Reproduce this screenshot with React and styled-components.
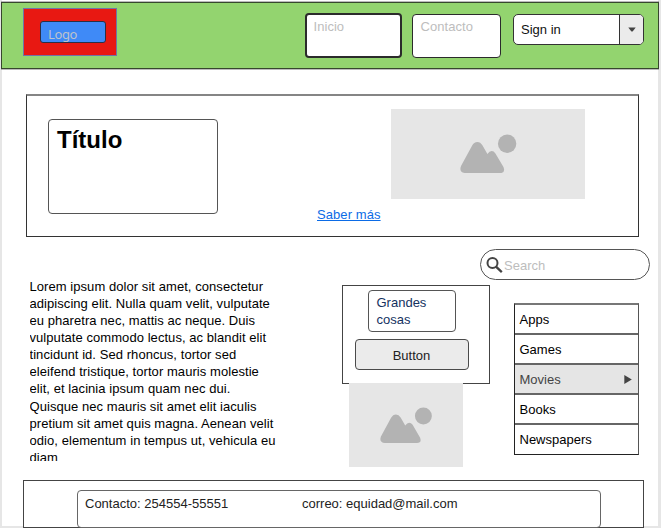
import React from 'react';
import styled, { createGlobalStyle } from 'styled-components';

const GlobalStyle = createGlobalStyle`
  * { box-sizing: border-box; }
  body {
    margin: 0;
    background: #ececec;
    font-family: 'Liberation Sans', Arial, sans-serif;
    font-size: 13px;
    line-height: 17px;
    color: #111;
  }
`;

const Page = styled.div`
  width: 661px;
  height: 528px;
  overflow: hidden;
  padding-top: 1px;
  background: linear-gradient(#fff, #fff) 2px 0 / 656px 526px no-repeat, #e6e6e6;
`;

const Header = styled.header`
  display: flex;
  align-items: flex-start;
  width: 658px;
  height: 67px;
  margin: 1px 0 0 1px;
  padding: 0 14px 0 21px;
  border: 1px solid #37472e;
  background: #93d46f;
  box-shadow: 0 1px 0 rgba(60, 60, 60, 0.35), 0 -1px 0 rgba(60, 60, 60, 0.35);
`;

const LogoFrame = styled.div`
  width: 94px;
  height: 48px;
  margin: 5px auto 0 0;
  padding: 12px 0 0 16px;
  border: 1px solid #7173a5;
  background: #e81812;
`;

const Logo = styled.div`
  width: 66px;
  height: 22px;
  padding: 3px 0 0 7px;
  border: 1px solid #2c2f45;
  border-radius: 3px;
  background: #3f8af7;
  color: #bdc3cc;
  font-family: 'Noto Sans', sans-serif;
  font-size: 13px;
  letter-spacing: -0.4px;
  line-height: 18px;
`;

const NavBox = styled.a`
  width: ${(p) => (p.$active ? 97 : 89)}px;
  height: ${(p) => (p.$active ? 45 : 44)}px;
  margin: ${(p) => (p.$active ? '10px 10px 0 0' : '11px 12px 0 0')};
  padding: ${(p) => (p.$active ? '3px 6.5px' : '3px 7.5px')};
  border: ${(p) => (p.$active ? 2 : 1)}px solid #2b2b2b;
  border-radius: 4px;
  background: #fff;
  color: #bdbdbd;
  letter-spacing: 0.05px;
`;

const Select = styled.div`
  display: flex;
  width: 131px;
  height: 31px;
  margin-top: 11px;
  border: 1px solid #333;
  border-radius: 5px;
  background: #fff;
  overflow: hidden;
  line-height: 30px;
`;

const SelectValue = styled.span`
  flex: 1;
  padding-left: 7px;
`;

const SelectArrow = styled.span`
  display: flex;
  align-items: center;
  justify-content: center;
  width: 24px;
  border-left: 1px solid #333;
  background: #ebebeb;
`;

const Hero = styled.section`
  display: flex;
  align-items: flex-start;
  width: 613px;
  height: 143px;
  margin: 25px 0 0 26px;
  border: 1px solid #333;
  border-top: 2px solid #858585;
`;

const TitleBox = styled.h1`
  width: 170px;
  height: 95px;
  margin: 23px 0 0 21px;
  padding: 5px 8px;
  border: 1px solid #555;
  border-radius: 4px;
  color: #000;
  font-size: 24px;
  line-height: 30px;
`;

const MoreLink = styled.a`
  margin: 110px 10px 0 99px;
  width: 64px;
  white-space: nowrap;
  color: #0b6be6;
  letter-spacing: 0.08px;
  text-decoration: underline;
`;

const ImageBox = styled.div`
  display: flex;
  width: ${(p) => p.$w}px;
  height: ${(p) => p.$h}px;
  margin: ${(p) => p.$m};
  padding: ${(p) => p.$pad};
  background: #e6e6e6;
`;

const Content = styled.main`
  display: flex;
  align-items: flex-start;
  height: 243px;
`;

const Article = styled.p`
  width: 256px;
  height: 183px;
  margin: 41px 0 0 29.5px;
  overflow: hidden;
  white-space: pre-line;
  color: #000;
  letter-spacing: 0.06px;
  line-height: 17.08px;
`;

const Middle = styled.div`
  width: 148px;
  margin: 48px 0 0 56.5px;
`;

const Card = styled.div`
  width: 148px;
  height: 99px;
  padding: 4px 0 0 12px;
  border: 1px solid #444;
`;

const CardText = styled.div`
  width: 88px;
  height: 42px;
  margin: 0 0 7px 13px;
  padding: 3px 7.5px;
  border: 1px solid #555;
  border-radius: 4px;
  color: #14325f;
`;

const Button = styled.button`
  display: block;
  width: 114px;
  height: 31px;
  margin: 0 0 0 -0.5px;
  padding: 1px 0 0;
  border: 1px solid #4a4a4a;
  border-radius: 4px;
  background: #ebebeb;
  color: #222;
  font: inherit;
`;

const Side = styled.aside`
  margin: 12px 0 0 -10px;
`;

const SearchBox = styled.div`
  display: flex;
  align-items: center;
  gap: 1px;
  width: 170px;
  height: 31px;
  padding: 2px 0 0 5px;
  border: 1px solid #555;
  border-radius: 16px;
  background: #fff;
  color: #bdbdbd;
`;

const Menu = styled.ul`
  width: 125px;
  margin: 23px 0 0 34px;
  padding: 0;
  list-style: none;
  border: 1px solid #222;
  border-top: 2px solid #777;
  border-right-color: #555;
`;

const MenuItem = styled.li`
  display: flex;
  align-items: center;
  justify-content: space-between;
  height: 30px;
  padding: 1px 6px 0 4.5px;
  border-bottom: 2px solid #666;
  background: ${(p) => (p.$selected ? '#e5e5e5' : '#fff')};
  color: ${(p) => (p.$selected ? '#444' : '#000')};
  &:last-child { border-bottom-width: 0; height: 29px; padding-bottom: 1px; }
`;

const Footer = styled.footer`
  width: 621px;
  height: 48px;
  margin-left: 23px;
  padding: 9px 0 0 52.5px;
  border: 1px solid #444;
  background: #fff;
`;

const ContactBox = styled.div`
  display: flex;
  width: 524px;
  height: 38px;
  padding: 4px 7.5px;
  border: 1px solid #666;
  border-radius: 4px;
  color: #222;
`;

const Phone = styled.span`
  width: 217px;
`;

function Landscape({ width }) {
  return (
    <svg width={width} height={(width * 117) / 169} viewBox="510 117 169 117">
      <g fill="#b3b3b3">
        <circle cx="651" cy="146" r="27.5" />
        <path d="M513 213 L546 152 Q552 141 562 141 Q571 141 577 151 L592 177 Q598 168 605 168 Q611 168 616 175 L640 216 Q647 234 630 234 H526 Q506 232 513 213Z" />
      </g>
    </svg>
  );
}

const menuItems = ['Apps', 'Games', 'Movies', 'Books', 'Newspapers'];

const lorem = `Lorem ipsum dolor sit amet, consectetur
adipiscing elit. Nulla quam velit, vulputate
eu pharetra nec, mattis ac neque. Duis
vulputate commodo lectus, ac blandit elit
tincidunt id. Sed rhoncus, tortor sed
eleifend tristique, tortor mauris molestie
elit, et lacinia ipsum quam nec dui.
Quisque nec mauris sit amet elit iaculis
pretium sit amet quis magna. Aenean velit
odio, elementum in tempus ut, vehicula eu
diam`;

export default function App() {
  return (
    <Page>
      <GlobalStyle />
      <Header>
        <LogoFrame>
          <Logo>Logo</Logo>
        </LogoFrame>
        <NavBox $active>Inicio</NavBox>
        <NavBox>Contacto</NavBox>
        <Select>
          <SelectValue>Sign in</SelectValue>
          <SelectArrow>
            <svg width="8" height="5" viewBox="0 0 8 5">
              <path d="M0.3 0.4H7.7L4.8 4.2Q4 5 3.2 4.2Z" fill="#444" />
            </svg>
          </SelectArrow>
        </Select>
      </Header>

      <Hero>
        <TitleBox>Título</TitleBox>
        <MoreLink>Saber más</MoreLink>
        <ImageBox $w={194} $h={90} $m="13px 0 0 0" $pad="25px 0 0 69px">
          <Landscape width={56.5} />
        </ImageBox>
      </Hero>

      <Content>
        <Article>{lorem}</Article>
        <Middle>
          <Card>
            <CardText>Grandes cosas</CardText>
            <Button>Button</Button>
          </Card>
          <ImageBox $w={114} $h={84} $m="-1px 0 0 7px" $pad="24px 0 0 31px">
            <Landscape width={52} />
          </ImageBox>
        </Middle>
        <Side>
          <SearchBox>
            <svg width="17" height="17" viewBox="0 0 17 17" fill="none" stroke="#444">
              <circle cx="6.5" cy="6" r="5" strokeWidth="2" />
              <path d="M10 9.6L15.8 15.2" strokeWidth="2.3" />
            </svg>
            Search
          </SearchBox>
          <Menu>
            {menuItems.map((item) => (
              <MenuItem key={item} $selected={item === 'Movies'}>
                {item}
                {item === 'Movies' && (
                  <svg width="8" height="9" viewBox="0 0 8 9">
                    <path d="M0.3 0L7.8 4.5L0.3 9Z" fill="#444" />
                  </svg>
                )}
              </MenuItem>
            ))}
          </Menu>
        </Side>
      </Content>

      <Footer>
        <ContactBox>
          <Phone>Contacto: 254554-55551</Phone>
          <span>correo: equidad@mail.com</span>
        </ContactBox>
      </Footer>
    </Page>
  );
}
